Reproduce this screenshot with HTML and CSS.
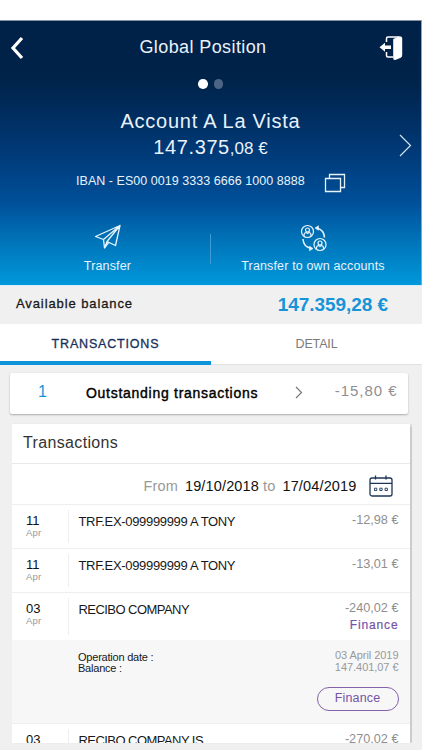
FILE: index.html
```html
<!DOCTYPE html>
<html lang="en">
<head>
<meta charset="utf-8">
<title>Global Position</title>
<link rel="stylesheet" href="styles.css">
</head>
<body>
<main class="app">
  <header class="hero">
    <div class="topbar">
      <svg class="back" viewBox="0 0 14 24" width="14" height="24"><path d="M12 2 3 12l9 10" fill="none" stroke="#fff" stroke-width="3.2"/></svg>
      <h1><span class="t-title">Global Position</span></h1>
      <svg class="exit" viewBox="0 0 24 26" width="24" height="26">
        <path d="M7.500 7V3.500q0-1.500 1.500-1.500H20M7.500 17v3.500q0 1.500 1.500 1.500h5" fill="none" stroke="#fff" stroke-width="1.500"/>
        <path d="M.5 12.200 6 7.700v2.800h6v3.400H6v2.800z" fill="#fff"/>
        <path d="M14.200 4 20.500 1.300q2.700 0 2.700 2.200V20q0 2.500-2 3l-4.300 1.800q-2.700.7-2.700-1.300z" fill="#fff"/>
      </svg>
    </div>
    <div class="dots"><i class="dot on"></i><i class="dot"></i></div>
    <section class="account">
      <div class="account-name"><span class="t-name">Account A La Vista</span></div>
      <div class="account-balance"><span class="t-int">147.375</span><span class="t-dec">,08 €</span></div>
      <svg class="next" viewBox="0 0 13 23" width="13" height="23"><path d="M1 1l10.500 10.500L1 22" fill="none" stroke="#d3e2f1" stroke-width="1.200"/></svg>
      <div class="iban"><span class="t-iban">IBAN - ES00 0019 3333 6666 1000 8888</span>
        <svg viewBox="0 0 22 20" width="22" height="20"><path d="M5.500 5V1.500h15v13H17M1.500 5.500h15v13h-15z" fill="none" stroke="#e8f2fb" stroke-width="1.300"/></svg>
      </div>
    </section>
    <nav class="actions">
      <div class="action">
        <svg viewBox="0 0 28 26" width="28" height="26"><path d="M1.500 12.500 26 1.500 21.500 21.500 13 17.500 10.500 24 9.500 15.500zM9.500 15.500 26 1.500 13 17.500M10.500 24l4-5.500" fill="none" stroke="#e6f4fd" stroke-width="1.300" stroke-linejoin="round"/></svg>
        <span class="t-act">Transfer</span>
      </div>
      <div class="action wide">
        <svg viewBox="0 0 28 28" width="28" height="28" fill="none" stroke="#e6f4fd" stroke-width="1.200">
          <circle cx="7.500" cy="7.500" r="6"/><circle cx="7.500" cy="6" r="2"/><path d="M4 12V11q0-2.300 2.300-2.500l1.200 1 1.200-1Q11 8.700 11 11v1"/>
          <circle cx="20" cy="20.500" r="6"/><circle cx="20" cy="19" r="2"/><path d="M16.500 25v-1q0-2.300 2.300-2.500l1.200 1 1.200-1q2.300.2 2.300 2.500v1"/>
          <path d="M17 4.200q7 1.500 7.500 9.300M3 15q.5 8 8 9.300" stroke-width="1.500"/>
          <path d="M15 4 18.500 1.800v4.400zM13 24.600 9.500 22.200v4.600z" fill="#e6f4fd" stroke-width=".6"/>
        </svg>
        <span class="t-own">Transfer to own accounts</span>
      </div>
    </nav>
  </header>
  <section class="available">
    <span class="t-avail">Available balance</span>
    <span class="t-total">147.359,28 €</span>
  </section>
  <nav class="tabs">
    <div class="tab active"><span class="t-tab1">TRANSACTIONS</span></div>
    <div class="tab"><span class="t-tab2">DETAIL</span></div>
  </nav>
  <section class="outstanding">
    <span class="count">1</span>
    <span class="t-out">Outstanding transactions</span>
    <svg viewBox="0 0 8 13" width="8" height="13"><path d="M1 1l5.500 5.500L1 12" fill="none" stroke="#777" stroke-width="1.200"/></svg>
    <span class="t-outamt">-15,80 €</span>
  </section>
  <section class="list">
    <h2><span class="t-h2">Transactions</span></h2>
    <div class="range">
      <span class="t-from">From</span><span class="t-date">19/10/2018</span><span class="t-to">to</span><span class="t-date">17/04/2019</span>
      <svg viewBox="0 0 24 22" width="24" height="22" fill="none" stroke="#1d3557" stroke-width="1.300"><rect x="1" y="3" width="22" height="18" rx="2"/><path d="M1 8.300h22M6.500.5v4M17 .5v4"/><path d="M5.500 13.200h2.300v2.300H5.500zM10.800 13.200h2.300v2.300h-2.300zM16.100 13.200h2.300v2.300h-2.300z" stroke-width=".9"/></svg>
    </div>
    <article class="row">
      <div class="day"><b>11</b><small>Apr</small></div>
      <div class="concept"><span class="t-trf">TRF.EX-099999999 A TONY</span></div>
      <div class="amount"><span>-12,98 €</span></div>
    </article>
    <article class="row">
      <div class="day"><b>11</b><small>Apr</small></div>
      <div class="concept"><span class="t-trf">TRF.EX-099999999 A TONY</span></div>
      <div class="amount"><span>-13,01 €</span></div>
    </article>
    <article class="row tall">
      <div class="day"><b>03</b><small>Apr</small></div>
      <div class="concept"><span class="t-rec">RECIBO COMPANY</span></div>
      <div class="amount"><span>-240,02 €</span><em>Finance</em></div>
    </article>
    <div class="details">
      <div class="labels"><span class="t-op">Operation date :</span><span class="t-bal">Balance :</span></div>
      <div class="values"><span class="t-opv">03 April 2019</span><span class="t-balv">147.401,07 €</span><button>Finance</button></div>
    </div>
    <article class="row last">
      <div class="day"><b>03</b></div>
      <div class="concept"><span class="t-rec">RECIBO COMPANY IS</span></div>
      <div class="amount"><span>-270,02 €</span></div>
    </article>
  </section>
</main>
</body>
</html>
```
FILE: styles.css
```css
* { box-sizing: border-box; }
body { margin: 0; background: #fff; font-family: "Liberation Sans", Arial, sans-serif; }
h1, h2 { margin: 0; font-weight: 400; }
svg { display: block; flex: none; }
span { white-space: nowrap; }

.app { width: 422px; height: 750px; padding-top: 20px; overflow: hidden; background: linear-gradient(#fff 0 20px, #f0f0f0 20px); }

.hero { height: 265px; color: #e9f2fb; border-top: 1px solid #8291a4; border-right: 1px solid #7fa8cc; background: linear-gradient(#002147 0%, #002349 22%, #002b5b 33%, #003a78 50%, #00509a 69%, #0073b8 83%, #0098db 100%); }
.topbar { height: 52px; display: grid; grid-template-columns: 60px 1fr 75px; align-items: center; }
.back { margin: 2px 0 0 10px; }
.exit { margin: 1px 0 0 33px; }
h1 { text-align: center; line-height: 22px; padding-bottom: 5px; }
.t-title { font-size: 18px; letter-spacing: .4px; }
.dots { height: 22px; display: flex; justify-content: center; align-items: center; gap: 6px; }
.dot { width: 9.500px; height: 9.500px; border-radius: 50%; background: #4d6584; }
.dot.on { background: #fff; }

.account { height: 117px; display: grid; grid-template-columns: 1fr 22px; grid-template-rows: 35px 30px 52px; padding-top: 6px; }
.account-name { grid-column: 1 / 3; text-align: center; line-height: 40px; }
.account-balance { grid-column: 1; text-align: center; line-height: 22px; padding-left: 22px; }
.next { grid-column: 2; margin: -2px 0 0 0; }
.iban { grid-column: 1 / 3; display: flex; gap: 20px; padding: 7px 0 0 76px; line-height: 17px; }
.iban svg { margin: 0 0 0 -1px; }
.t-name { font-size: 20px; letter-spacing: .75px; }
.t-int { font-size: 20px; letter-spacing: .6px; }
.t-dec { font-size: 17px; }
.t-iban { font-size: 12.500px; letter-spacing: .04px; }

.actions { display: flex; padding-top: 11px; }
.action { width: 210px; height: 51px; display: flex; flex-direction: column; align-items: center; justify-content: space-between; padding-left: 5px; }
.action.wide { padding: 0 4px 0 0; }
.action.wide::before { content: ""; width: 1px; height: 30px; margin: 11px 0 -42px; align-self: flex-start; background: #3d9bd5; }
.action.wide svg { margin-left: 1px; margin-top: -5px; }
.action:not(.wide) svg { margin-top: 1px; }
.action span { font-size: 12.500px; line-height: 16px; letter-spacing: .15px; }

.available { height: 39px; display: flex; justify-content: space-between; padding: 0 34px 0 16px; border-top: 1px solid #d7edf8; line-height: 36px; }
.t-avail { font-size: 13px; letter-spacing: .9px; color: #181818; -webkit-text-stroke: .3px #181818; }
.t-total { font-size: 19px; line-height: 38px; font-weight: 700; letter-spacing: -.05px; color: #1694d8; }
.tabs { height: 41px; display: flex; background: #fff; border-bottom: 1px solid #e2e2e2; }
.tab { flex: 1; height: 41px; text-align: center; line-height: 40px; color: #7b7b7b; font-size: 12.500px; }
.tab.active { color: #16305a; border-bottom: 4px solid #0d93d8; -webkit-text-stroke: .3px #16305a; }
.t-tab1 { letter-spacing: .82px; }
.t-tab2 { letter-spacing: -.15px; }

.outstanding { width: 397.500px; height: 41px; margin: 8px 0 0 10px; display: flex; align-items: center; background: #fff; border-radius: 2px; box-shadow: 0 1px 2px #aaa; }
.count { width: 76px; padding: 0 0 3px 28px; color: #1694d8; font-size: 16px; }
.t-out { width: 209px; margin-top: -2px; font-size: 14px; color: #000; -webkit-text-stroke: .4px #000; letter-spacing: .72px; }
.outstanding svg { margin-top: -3px; }
.t-outamt { margin: -7px 10px 0 auto; font-size: 15px; color: #8f8f8f; letter-spacing: .95px; }

.list { width: 397.500px; height: 319px; margin: 10px 0 0 12px; overflow: hidden; background: #fff; box-shadow: 1.500px 0 1px #ccc; }
h2 { height: 40px; padding-left: 11px; line-height: 36px; border-bottom: 1px solid #e9e9e9; color: #333; }
.t-h2 { display: block; padding-top: 1px; font-size: 16px; letter-spacing: .35px; }
.range { height: 41px; display: flex; justify-content: flex-end; align-items: center; padding: 3px 17px 0 0; border-bottom: 1px solid #eee; font-size: 14.500px; letter-spacing: .15px; color: #999; }
.t-date { color: #111; margin-left: 7px; }
.t-to { margin-left: 4px; }
.range svg { margin-left: 12px; }
.row { height: 43.800px; display: flex; border-bottom: 1px solid #eee; font-size: 13px; line-height: 15px; }
.row.tall { height: 47.400px; border: 0; }
.row.last { height: 19px; border: 0; }
.day { width: 56px; padding: 9px 0 0 14px; }
.day b { display: block; font-weight: 400; line-height: 14px; color: #111; }
.day small { display: block; font-size: 9.500px; line-height: 9px; letter-spacing: .2px; color: #999; }
.concept { flex: 1; margin: 5px 0 5px; padding: 4px 0 0 9.500px; border-left: 1px solid #eee; color: #181818; }
.row.last .concept { margin-bottom: 0; }
.t-trf { letter-spacing: -.33px; }
.t-rec { letter-spacing: -.55px; }
.amount { padding: 8px 11px 0 0; text-align: right; color: #8f8f8f; font-size: 12.700px; }
.amount em { display: block; font-style: normal; font-size: 12px; line-height: 18px; letter-spacing: .85px; color: #7454a5; -webkit-text-stroke: .2px #7454a5; }
.details { height: 84.500px; display: flex; justify-content: space-between; padding: 9px 11px 0 66px; background: #f7f7f7; border-bottom: 1px solid #eee; font-size: 11px; line-height: 11.500px; }
.labels span, .values span { display: block; }
.labels { padding-top: 3px; color: #181818; letter-spacing: -.22px; }
.values { text-align: right; color: #999; line-height: 12px; letter-spacing: -.05px; }
button { width: 82px; height: 24.500px; margin: 14px 0 0; padding: 0 0 3px; border: 1px solid #8262aa; border-radius: 13px; background: transparent; color: #7454a5; font: 12.500px "Liberation Sans", sans-serif; letter-spacing: .15px; }
```
